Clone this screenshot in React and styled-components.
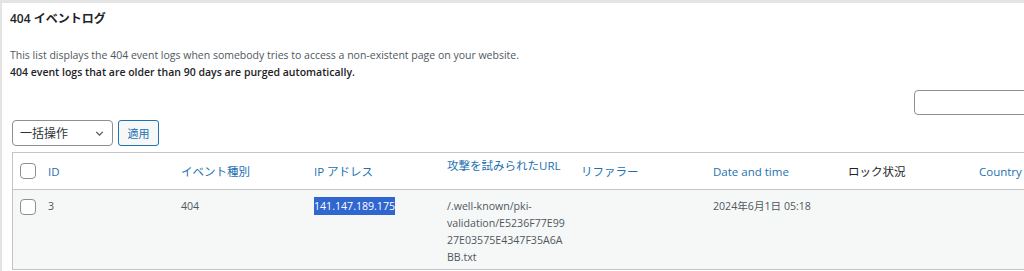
import React from 'react'
import styled, { createGlobalStyle } from 'styled-components'

const GlobalStyle = createGlobalStyle`
  body {
    margin: 0;
    background: #ffffff;
    font-family: "Open Sans", "Noto Sans CJK JP", sans-serif;
    overflow: hidden;
  }
`

const COLUMNS = '27px 133px 133px 133px 134px 132px 135px 131px 133px'

const headers = [
  { label: 'ID', link: true },
  { label: 'イベント種別', link: true },
  { label: 'IP アドレス', link: true },
  { label: '攻撃を試みられたURL', link: true, top: true },
  { label: 'リファラー', link: true },
  { label: 'Date and time', link: true },
  { label: 'ロック状況', link: false },
  { label: 'Country', link: true }
]

const App = () => {
  return (
    <Frame>
      <GlobalStyle />
      <Title>404 イベントログ</Title>
      <Description>
        <p>This list displays the 404 event logs when somebody tries to access a non-existent page on your website.</p>
        <p className="strong">404 event logs that are older than 90 days are purged automatically.</p>
      </Description>
      <SearchRow>
        <SearchInput type="search" />
      </SearchRow>
      <TableNav>
        <BulkSelect>
          <span>一括操作</span>
          <Chevron viewBox="0 0 16 16">
            <path d="M4 6l4 4 4-4" />
          </Chevron>
        </BulkSelect>
        <ApplyButton>適用</ApplyButton>
      </TableNav>
      <Table>
        <HeadRow>
          <CheckCell>
            <Checkbox />
          </CheckCell>
          {headers.map(h => (
            <HeadCell key={h.label} $link={h.link} $top={h.top}>
              {h.label}
            </HeadCell>
          ))}
        </HeadRow>
        <BodyRow>
          <CheckCell $body>
            <Checkbox />
          </CheckCell>
          <Cell>3</Cell>
          <Cell>404</Cell>
          <Cell>
            <Selected>141.147.189.175</Selected>
          </Cell>
          <Cell $wrap>/.well-known/pki-validation/E5236F77E9927E03575E4347F35A6ABB.txt</Cell>
          <Cell />
          <Cell>2024年6月1日 05:18</Cell>
          <Cell />
          <Cell />
        </BodyRow>
      </Table>
    </Frame>
  )
}

const Frame = styled('div')`
  height: 268px;
  border-top: 3px solid #e4e4e4;
  border-left: 2px solid #e4e4e4;
  padding-left: 8px;
  overflow: hidden;
`

const Title = styled('h2')`
  margin: 7px 0 0;
  font-size: 12px;
  line-height: 18px;
  font-weight: 600;
  color: #1d2327;
`

const Description = styled('div')`
  margin-top: 19px;
  font-size: 10.5px;
  line-height: 17px;
  color: #50575e;
  p {
    margin: 0;
  }
  .strong {
    font-weight: 600;
    color: #1d2327;
  }
`

const SearchRow = styled('div')`
  display: flex;
  justify-content: flex-end;
  margin-top: 9px;
  margin-right: -20px;
`

const SearchInput = styled('input')`
  width: 130px;
  height: 25px;
  box-sizing: border-box;
  border: 1px solid #8c8f94;
  border-radius: 4px;
  background: #ffffff;
`

const TableNav = styled('div')`
  display: flex;
  gap: 5px;
  margin: 5px 0 0 2px;
`

const BulkSelect = styled('div')`
  width: 101px;
  height: 26px;
  box-sizing: border-box;
  border: 1px solid #8c8f94;
  border-radius: 4px;
  display: flex;
  align-items: center;
  justify-content: space-between;
  padding: 0 6px 0 7px;
  font-size: 12px;
  color: #2c3338;
`

const Chevron = styled('svg')`
  width: 13px;
  height: 13px;
  fill: none;
  stroke: #50575e;
  stroke-width: 1.6;
`

const ApplyButton = styled('button')`
  width: 41px;
  height: 26px;
  box-sizing: border-box;
  border: 1px solid #2271b1;
  border-radius: 3px;
  background: #f6f7f7;
  color: #2271b1;
  font-family: inherit;
  font-size: 11px;
  padding: 0;
`

const Table = styled('div')`
  margin: 6px 0 0 2px;
  width: 1120px;
  border: 1px solid #c3c4c7;
  border-right: none;
`

const HeadRow = styled('div')`
  display: grid;
  grid-template-columns: ${COLUMNS};
  height: 36px;
  border-bottom: 1px solid #c3c4c7;
  background: #ffffff;
`

const BodyRow = styled('div')`
  display: grid;
  grid-template-columns: ${COLUMNS};
  height: 79px;
  background: #f6f7f7;
`

const CheckCell = styled('div')`
  display: flex;
  align-items: ${p => (p.$body ? 'flex-start' : 'center')};
  padding: ${p => (p.$body ? '9px 0 0 7px' : '0 0 0 7px')};
`

const Checkbox = styled('span')`
  width: 16px;
  height: 16px;
  box-sizing: border-box;
  border: 1px solid #8c8f94;
  border-radius: 4px;
  background: #ffffff;
`

const HeadCell = styled('div')`
  display: flex;
  align-items: ${p => (p.$top ? 'flex-start' : 'center')};
  padding: ${p => (p.$top ? '4px 8px 0' : '0 8px')};
  font-size: 11.5px;
  color: ${p => (p.$link ? '#2271b1' : '#1d2327')};
  white-space: nowrap;
`

const Cell = styled('div')`
  padding: 8px 8px 0;
  font-size: 10.6px;
  line-height: 17px;
  color: #50575e;
  overflow-wrap: ${p => (p.$wrap ? 'anywhere' : 'normal')};
  white-space: ${p => (p.$wrap ? 'normal' : 'nowrap')};
`

const Selected = styled('span')`
  background: #2f66d0;
  color: #ffffff;
  padding: 2px 0;
`

export default App
